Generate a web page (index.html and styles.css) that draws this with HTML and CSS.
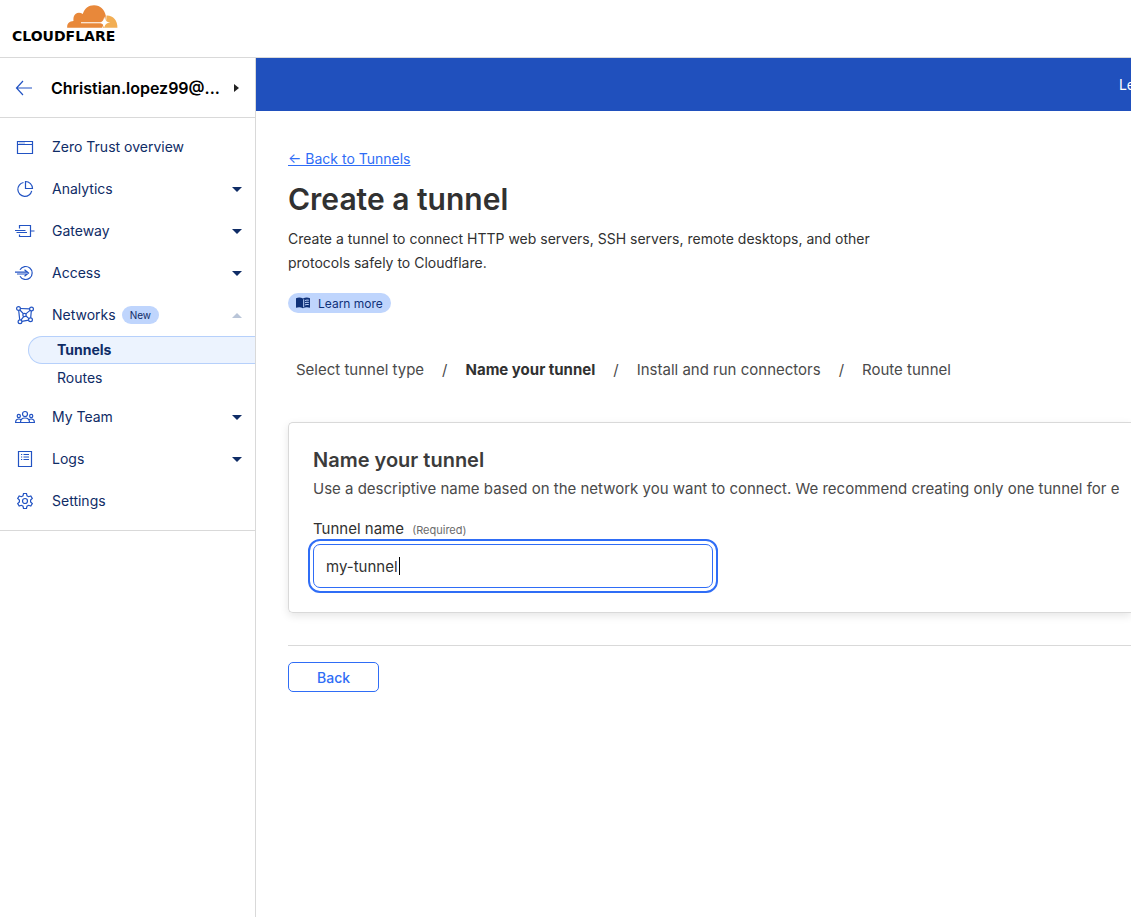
FILE: index.html
```html
<!DOCTYPE html>
<html lang="en">
<head>
<meta charset="utf-8">
<meta name="viewport" content="width=device-width, initial-scale=1">
<title>Create a tunnel</title>
<link rel="stylesheet" href="styles.css">
</head>
<body>
<header class="topbar">
  <a class="logo" href="#">
    <svg class="logo-cloud" viewBox="0 0 52 24" width="52" height="24" aria-hidden="true">
      <path fill="#e8883a" d="M.2 22.8c-.4-4 2-6.600 6.300-6.800-.4-3 .3-5.500 2-7 2-1.700 5-1.600 7.300 0C17.500 3.500 21.500.3 27 .3c6.500 0 10.500 4.200 11.800 10.400l-.8 6.500-3 5.600z"/>
      <path fill="#f2ae54" d="M39.500 10.400c6.300-.4 11.300 4.800 10.900 12.400H35.500l3.500-5z"/>
      <path fill="#fff" d="M14 17.300h18.500c2.700-.2 4-1.500 4.800-5.800.8 4.300 2.200 5.600 6 6.100-3.800.5-5.200 1.800-6 5.200-.8-3.400-2.100-4.400-4.800-4.500H14z"/>
    </svg>
    <span class="logo-word">CLOUDFLARE</span>
  </a>
</header>
<div class="layout">
  <aside class="sidebar">
    <div class="account">
      <a class="account-back" href="#" aria-label="Back">
        <svg viewBox="0 0 18 18" width="18" height="18" class="line"><path d="M8 2 1.500 9 8 16M1.500 9H17"/></svg>
      </a>
      <button class="account-name" type="button">
        <span>Christian.lopez99@...</span>
        <svg viewBox="0 0 5 8" width="5" height="8" aria-hidden="true"><path d="M0 0l5 4-5 4z" fill="#222"/></svg>
      </button>
    </div>
    <nav class="nav">
      <a class="nav-item" href="#">
        <svg class="line" viewBox="0 0 20 20" width="20" height="20"><path d="M2.500 4.500h15v12h-15zM2.500 7.500h15M4.500 6h1M6.500 6h1M8.500 6h1"/></svg>
        <span>Zero Trust overview</span>
      </a>
      <button class="nav-item" type="button">
        <svg class="line" viewBox="0 0 20 20" width="20" height="20"><path d="M8.500 3.500a7 7 0 1 0 8.200 8.300M10.500 2.500v7h7a7 7 0 0 0-7-7z"/></svg>
        <span>Analytics</span><i class="caret"></i>
      </button>
      <button class="nav-item" type="button">
        <svg class="line" viewBox="0 0 20 20" width="20" height="20"><path d="M4.500 7.500v-3h11v11h-11v-2M15.500 10h4M0 9.500h10.500M1.500 11.500h10.500"/></svg>
        <span>Gateway</span><i class="caret"></i>
      </button>
      <button class="nav-item" type="button">
        <svg class="line" viewBox="0 0 20 20" width="20" height="20"><path d="M5 6.800a6.500 6.500 0 1 1 0 6.400M0 9.200h13M2 11h11M9.500 6.800l4 3.200-4 3.200"/></svg>
        <span>Access</span><i class="caret"></i>
      </button>
      <button class="nav-item" type="button" aria-expanded="true">
        <svg class="line" viewBox="0 0 20 20" width="20" height="20"><circle cx="3.500" cy="3.500" r="1.900"/><circle cx="16.500" cy="4" r="1.900"/><circle cx="15.500" cy="14.800" r="1.900"/><circle cx="5" cy="16.800" r="1.900"/><circle cx="9.500" cy="10" r="1.700"/><path d="M5.400 3.500l9.200.3M16.300 6l-.6 6.800M6.900 16.400l6.700-1.200M3.700 5.500l1 9.300M4.900 5l3.400 3.700M15.100 5.400l-4.300 3.500M8.700 11.600l-2.800 3.500M11 11l3 2.600"/></svg>
        <span>Networks</span><span class="badge">New</span><i class="caret caret-up"></i>
      </button>
      <div class="subnav">
        <a class="sub-item sub-item-active" href="#" aria-current="page">Tunnels</a>
        <a class="sub-item" href="#">Routes</a>
      </div>
      <button class="nav-item" type="button">
        <svg class="line" viewBox="0 0 20 20" width="20" height="20"><circle cx="10" cy="7" r="2.500"/><circle cx="3.800" cy="9" r="1.600"/><circle cx="16.200" cy="9" r="1.600"/><path d="M5.500 15.500c0-3 1.500-4.500 4.500-4.500s4.500 1.500 4.500 4.500zM5.700 15.500H.6c0-2.500 1-3.500 3.200-3.500q1.400 0 2.200.7M14.300 15.500h5.100c0-2.500-1-3.500-3.200-3.500q-1.400 0-2.200.7"/></svg>
        <span>My Team</span><i class="caret"></i>
      </button>
      <button class="nav-item" type="button">
        <svg class="line" viewBox="0 0 20 20" width="20" height="20"><path d="M3.500 2.500h13v15h-13zM6 5.500h1.200M8.500 5.500H14M6 8h1.200M8.500 8H14M6 10.500h1.200M8.500 10.500H14"/></svg>
        <span>Logs</span><i class="caret"></i>
      </button>
      <a class="nav-item" href="#">
        <svg class="line" viewBox="0 0 20 20" width="20" height="20"><circle cx="10" cy="10" r="2.500"/><path d="M8.500 2.500h3l.5 2.300 1.600.9 2.200-.8 1.500 2.600-1.700 1.600v1.800l1.700 1.600-1.500 2.600-2.200-.8-1.600.9-.5 2.300h-3L8 15.200l-1.600-.9-2.200.8-1.500-2.600 1.700-1.600V9.100L2.700 7.500l1.500-2.600 2.200.8L8 4.800z"/></svg>
        <span>Settings</span>
      </a>
    </nav>
  </aside>
  <main class="main">
    <div class="banner"><a href="#">Le</a></div>
    <div class="page">
      <a class="back-link" href="#">← Back to Tunnels</a>
      <h1>Create a tunnel</h1>
      <p class="intro">Create a tunnel to connect HTTP web servers, SSH servers, remote desktops, and other protocols safely to Cloudflare.</p>
      <a class="learn" href="#">
        <svg viewBox="0 0 14 12" width="14" height="12" aria-hidden="true"><path fill="#0f3179" d="M0 1.200C2.500.2 5 .4 7 1.600 9 .4 11.500.2 14 1.200v9.600c-2.500-.9-5-.7-7 .5-2-1.200-4.500-1.400-7-.5z"/><path fill="none" stroke="#bfd5fd" d="M7.700 2.300v8M9 3.500q2-.7 3.800-.3M9 5.700q2-.7 3.800-.3M9 7.900q2-.7 3.800-.3"/></svg>
        <span>Learn more</span>
      </a>
      <ol class="steps">
        <li>Select tunnel type</li>
        <li class="current" aria-current="step">Name your tunnel</li>
        <li>Install and run connectors</li>
        <li>Route tunnel</li>
      </ol>
      <section class="card">
        <h2>Name your tunnel</h2>
        <p class="card-text">Use a descriptive name based on the network you want to connect. We recommend creating only one tunnel for e</p>
        <label class="field-label" for="tunnel-name">Tunnel name <span>(Required)</span></label>
        <div class="field">
          <input id="tunnel-name" type="text" value="my-tunnel">
          <span class="text-cursor"></span>
        </div>
      </section>
      <div class="actions"><button class="back-button" type="button">Back</button></div>
    </div>
  </main>
</div>
</body>
</html>
```
FILE: styles.css
```css
* { box-sizing: border-box; }
body {
  margin: 0;
  min-height: 100vh;
  display: flex;
  flex-direction: column;
  font-family: Inter, "Liberation Sans", sans-serif;
  font-size: 14px;
  color: #313131;
  background: #fff;
}
a { color: inherit; text-decoration: none; }
button, input { font: inherit; color: inherit; }
button { background: none; border: 0; padding: 0; text-align: left; }
h1, h2, p, ol { margin: 0; padding: 0; }
svg { display: block; flex: none; }
.line { fill: none; stroke: #2253c3; stroke-width: 1.2; }

.topbar {
  height: 58px;
  padding: 5px 12px;
  border-bottom: 1px solid #d9d9d9;
}
.logo { display: inline-flex; flex-direction: column; min-width: 107px; }
.logo-cloud { align-self: flex-end; }
.logo-word {
  font-family: "DejaVu Sans", sans-serif;
  font-size: 14px;
  line-height: 14px;
  font-weight: 700;
  color: #000;
}

.layout { flex: 1; display: flex; }
.sidebar { flex: none; width: 256px; border-right: 1px solid #d9d9d9; }
.account {
  display: flex;
  align-items: center;
  gap: 18px;
  height: 60px;
  padding: 0 16px 0 15px;
  border-bottom: 1px solid #d9d9d9;
}
.account-name {
  flex: 1;
  display: flex;
  align-items: center;
  justify-content: space-between;
  font-size: 16px;
  font-weight: 600;
  color: #000;
}
.nav { padding: 8px 0; border-bottom: 1px solid #d9d9d9; color: #0f2c66; }
.nav-item {
  display: flex;
  align-items: center;
  width: 100%;
  height: 42px;
  padding: 0 13px 0 15px;
  line-height: 18px;
}
.nav-item svg { margin-right: 17px; }
.badge {
  margin-left: 6px;
  padding: 0 8px;
  border-radius: 9px;
  background: #bfd5fd;
  font-size: 10px;
  line-height: 18px;
}
.caret {
  margin-left: auto;
  border: 5px solid transparent;
  border-top-color: #0f2c66;
  border-bottom: 0;
}
.caret-up { border-top: 0; border-bottom: 5px solid #b9c5d8; }
.subnav { padding: 0 0 4px 28px; }
.sub-item {
  display: block;
  height: 28px;
  padding-left: 28px;
  border: 1px solid transparent;
  border-right: 0;
  line-height: 26px;
}
.sub-item-active {
  border-color: #b6d0fb;
  border-radius: 14px 0 0 14px;
  background: #ecf3fe;
  font-weight: 700;
}

.main { flex: 1; min-width: 0; overflow: hidden; }
.banner {
  display: flex;
  align-items: center;
  justify-content: flex-end;
  width: calc(100% + 4px);
  height: 53px;
  background: #2050bd;
  color: #fff;
}
.page { padding: 36px 0 32px 32px; }
.back-link {
  display: block;
  width: max-content;
  line-height: 24px;
  color: #2f6df6;
  text-decoration: underline;
}
h1 { margin-top: 8px; font-size: 30px; line-height: 40px; font-weight: 600; }
.intro { max-width: 600px; margin-top: 8px; line-height: 24px; }
.learn {
  display: flex;
  align-items: center;
  gap: 8px;
  width: max-content;
  height: 20px;
  margin-top: 18px;
  padding: 0 8px;
  border-radius: 10px;
  background: #bfd5fd;
  color: #0f3179;
  font-size: 12px;
}
.steps {
  display: flex;
  margin-top: 45px;
  padding-left: 8px;
  list-style: none;
  font-size: 15px;
  line-height: 24px;
  color: #4a4a4a;
  white-space: nowrap;
}
.steps li + li::before {
  content: "/";
  margin: 0 18px;
  font-weight: 400;
  color: #4a4a4a;
}
.steps .current { font-weight: 700; color: #313131; }
.card {
  margin-top: 40px;
  padding: 23px 0 24px 24px;
  border: 1px solid #d9d9d9;
  border-right: 0;
  border-radius: 5px 0 0 5px;
  box-shadow: 0 3px 8px rgba(0, 0, 0, 0.1);
}
h2 { font-size: 20px; line-height: 28px; font-weight: 600; color: #3b3b3b; }
.card-text { font-size: 15px; line-height: 30px; color: #4a4a4a; white-space: nowrap; }
.field-label { display: block; margin: 13px 0 2px; font-size: 15px; line-height: 24px; }
.field-label span { margin-left: 4px; font-size: 11px; color: #6b6b6b; }
.field { position: relative; width: 400px; max-width: 100%; }
.field input {
  display: block;
  width: 100%;
  height: 44px;
  padding: 0 12px;
  border: 1px solid #2f6df6;
  border-radius: 7px;
  outline: 2px solid #2f6df6;
  outline-offset: 3px;
  background: #fff;
  font-size: 15px;
}
.text-cursor {
  position: absolute;
  top: 13px;
  left: 86px;
  width: 1px;
  height: 18px;
  background: #000;
}
.actions { margin-top: 32px; padding-top: 16px; border-top: 1px solid #d9d9d9; }
.back-button {
  height: 30px;
  padding: 0 28px;
  border: 1px solid #2f6df6;
  border-radius: 5px;
  color: #2f6df6;
  font-weight: 500;
}
```
